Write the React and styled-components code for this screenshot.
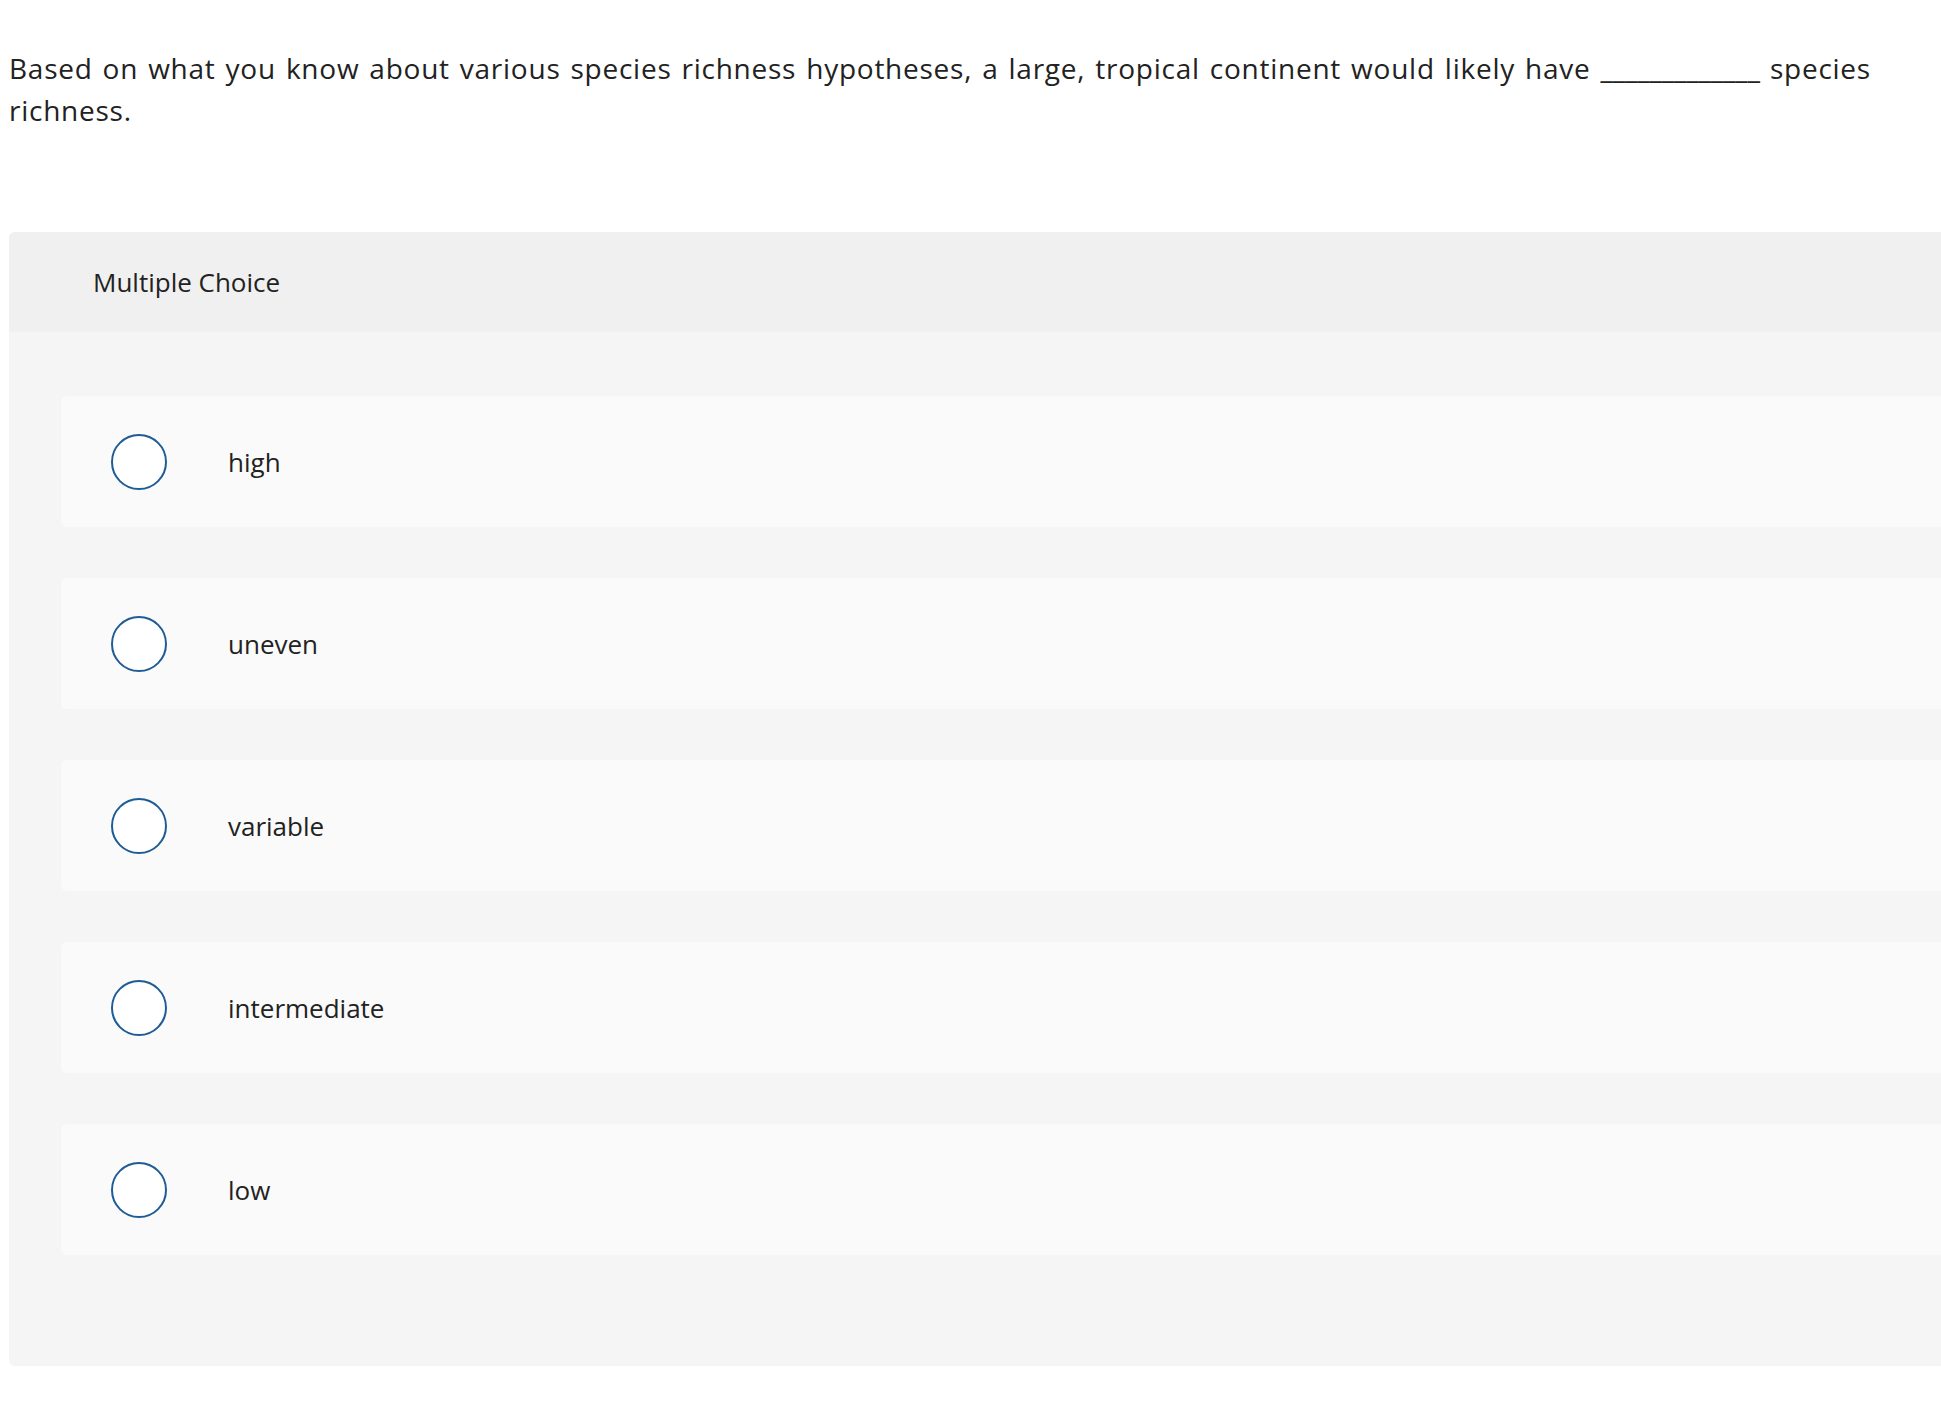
import React from "react";
import styled, { createGlobalStyle } from "styled-components";

const Global = createGlobalStyle`
  html, body { margin: 0; padding: 0; background: #fff; overflow: hidden; }
  body { font-family: "Open Sans", "Liberation Sans", sans-serif; color: #222; }
`;

const Page = styled.div`
  padding: 47px 0 0 9px;
  width: 1932px;
`;

const Question = styled.p`
  margin: 0;
  font-size: 28px;
  line-height: 42px;
  letter-spacing: 0.75px;
  word-spacing: 2px;
  color: #222;
  padding-right: 40px;
`;

const Blank = styled.span`
  letter-spacing: 0;
  word-spacing: 0;
`;

const Panel = styled.section`
  margin-top: 101px;
  width: 2000px;
  background: #f5f5f5;
  border-radius: 6px;
  overflow: hidden;
  padding-bottom: 111px;
`;

const PanelHeader = styled.header`
  height: 100px;
  background: #f0f0f0;
  display: flex;
  align-items: center;
  padding-left: 84px;
  font-size: 26px;
  color: #222;
`;

const Options = styled.div`
  display: flex;
  flex-direction: column;
  gap: 51px;
  padding: 64px 0 0 52px;
`;

const Option = styled.label`
  height: 131px;
  background: #fafafa;
  border-radius: 6px;
  display: flex;
  align-items: center;
  padding-left: 50px;
  cursor: pointer;
`;

const Radio = styled.span`
  width: 56px;
  height: 56px;
  box-sizing: border-box;
  border: 2px solid #1f5c96;
  border-radius: 50%;
  background: #fff;
  flex: none;
`;

const OptionText = styled.span`
  margin-left: 61px;
  font-size: 26px;
  color: #222;
`;

const choices = ["high", "uneven", "variable", "intermediate", "low"];

export default function App() {
  return (
    <>
      <Global />
      <Page>
        <Question>
          Based on what you know about various species richness hypotheses, a large, tropical continent would likely have{" "}
          <Blank>_____________</Blank> species richness.
        </Question>
        <Panel>
          <PanelHeader>Multiple Choice</PanelHeader>
          <Options>
            {choices.map((c) => (
              <Option key={c}>
                <Radio />
                <OptionText>{c}</OptionText>
              </Option>
            ))}
          </Options>
        </Panel>
      </Page>
    </>
  );
}
